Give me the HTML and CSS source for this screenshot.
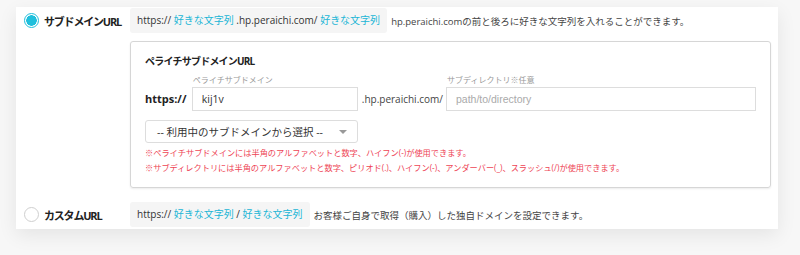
FILE: index.html
```html
<!DOCTYPE html>
<html lang="ja">
<head>
  <meta charset="UTF-8">
  <title>URL設定</title>
  <link rel="stylesheet" href="styles.css">
</head>
<body>
  <div class="card">
    <div class="option-row">
      <label class="option-label">
        <span class="radio checked"></span>
        <span class="option-name">サブドメインURL</span>
      </label>
      <div class="url-sample">https:// <span class="accent">好きな文字列</span> .hp.peraichi.com/ <span class="accent">好きな文字列</span></div>
      <div class="option-desc">hp.peraichi.comの前と後ろに好きな文字列を入れることができます。</div>
    </div>

    <div class="sub-panel">
      <div class="panel-title">ペライチサブドメインURL</div>
      <div class="field-row">
        <div class="prefix">https://</div>
        <div class="field sub-field">
          <div class="field-label">ペライチサブドメイン</div>
          <input class="text-input" type="text" value="kij1v">
        </div>
        <div class="domain">.hp.peraichi.com/</div>
        <div class="field dir-field">
          <div class="field-label">サブディレクトリ※任意</div>
          <input class="text-input placeholder-input" type="text" placeholder="path/to/directory">
        </div>
      </div>
      <div class="select-box">
        <span>-- 利用中のサブドメインから選択 --</span>
        <span class="caret"></span>
      </div>
      <p class="note">※ペライチサブドメインには半角のアルファベットと数字、ハイフン(-)が使用できます。</p>
      <p class="note">※サブディレクトリには半角のアルファベットと数字、ピリオド(.)、ハイフン(-)、アンダーバー(_)、スラッシュ(/)が使用できます。</p>
    </div>

    <div class="option-row custom-row">
      <label class="option-label">
        <span class="radio"></span>
        <span class="option-name">カスタムURL</span>
      </label>
      <div class="url-sample">https:// <span class="accent">好きな文字列</span> / <span class="accent">好きな文字列</span></div>
      <div class="option-desc">お客様ご自身で取得（購入）した独自ドメインを設定できます。</div>
    </div>
  </div>
</body>
</html>
```

FILE: styles.css
```css
body {
  font-family: 'Open Sans', 'Noto Sans CJK JP', sans-serif;
  background: #f7f7f7;
  margin: 0;
  padding: 7px 22px 25px 16px;
  color: #333;
  font-size: 10px;
}

.card {
  width: 762px;
  background: #fff;
  box-sizing: border-box;
  padding: 1px 7px 2px 8px;
  box-shadow: 0 6px 18px rgba(0,0,0,0.08);
}

.option-row {
  display: flex;
  align-items: center;
}

.option-label {
  width: 106px;
  display: flex;
  align-items: center;
  flex-shrink: 0;
  white-space: nowrap;
}

.radio {
  width: 13px;
  height: 13px;
  border: 1px solid #cfcfcf;
  border-radius: 50%;
  background: #fff;
  margin-right: 5px;
  flex-shrink: 0;
}

.radio.checked {
  border-color: #1fbfdc;
  background: radial-gradient(circle, #1fbfdc 0 5px, #fff 5.5px);
}

.option-name {
  font-weight: bold;
  font-size: 11px;
  letter-spacing: -1.2px;
  color: #222;
}

.url-sample {
  background: #f5f5f5;
  height: 25px;
  line-height: 25px;
  padding: 0 7px;
  border-radius: 3px;
  color: #333;
  white-space: nowrap;
}

.accent {
  color: #22b6d6;
}

.option-desc {
  margin-left: 4px;
  color: #444;
  font-size: 9.5px;
  white-space: nowrap;
}

.sub-panel {
  margin: 8px 0 0 106px;
  width: 641px;
  box-sizing: border-box;
  border: 1px solid #d6d6d6;
  border-radius: 3px;
  padding: 12px 14px 12px 14px;
  box-shadow: 0 1px 2px rgba(0,0,0,0.08);
}

.panel-title {
  font-weight: bold;
  font-size: 10px;
  letter-spacing: -0.8px;
  color: #222;
  line-height: 14px;
}

.field-row {
  display: flex;
  align-items: flex-end;
  margin-top: 6px;
}

.prefix {
  width: 47px;
  font-weight: bold;
  font-size: 11px;
  line-height: 24px;
  color: #222;
}

.field-label {
  font-size: 8px;
  color: #999;
  line-height: 12px;
  margin: 0 0 1px 1px;
}

.text-input {
  display: block;
  box-sizing: border-box;
  height: 24px;
  border: 1px solid #ddd;
  padding: 0 9px;
  font-family: 'Open Sans', sans-serif;
  font-size: 10.5px;
  color: #333;
  outline: none;
}

.sub-field .text-input {
  width: 166px;
}

.dir-field .text-input {
  width: 310px;
}

.placeholder-input::placeholder {
  font-family: 'Liberation Sans', sans-serif;
  color: #aaa;
}

.domain {
  line-height: 24px;
  padding: 0 3px 0 4px;
  color: #444;
  font-size: 10px;
}

.select-box {
  margin-top: 9px;
  width: 213px;
  height: 23px;
  box-sizing: border-box;
  border: 1px solid #ddd;
  border-radius: 3px;
  display: flex;
  align-items: center;
  justify-content: space-between;
  padding: 0 10px 0 11px;
  color: #333;
  font-size: 10.5px;
}

.caret {
  width: 0;
  height: 0;
  border-left: 4px solid transparent;
  border-right: 4px solid transparent;
  border-top: 4px solid #999;
}

.note {
  margin: 0;
  color: #ee4455;
  font-size: 8.2px;
  line-height: 15px;
}

.note:first-of-type {
  margin-top: 2px;
}

.custom-row {
  margin-top: 14px;
}
```
